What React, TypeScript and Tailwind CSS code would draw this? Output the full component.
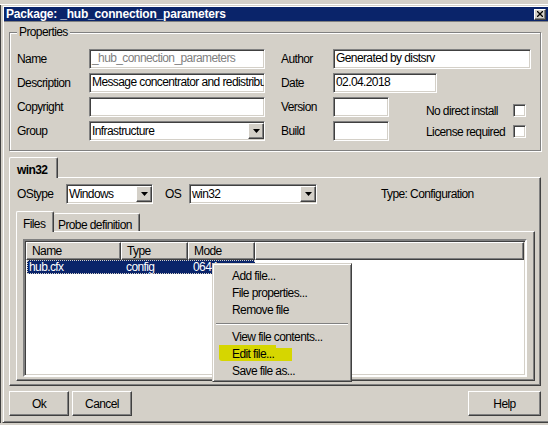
const sunken =
  "border border-t-[#808080] border-l-[#808080] border-b-white border-r-white shadow-[inset_1px_1px_0_#404040,inset_-1px_-1px_0_#d4d0c8]";
const raised =
  "border border-t-white border-l-white border-b-[#404040] border-r-[#404040] shadow-[inset_-1px_-1px_0_#808080]";

function Field({ value = "", w, muted }: { value?: string; w: string; muted?: boolean }) {
  return (
    <div className={`${sunken} ${w} h-[20px] bg-white pl-[2px] leading-[16px] whitespace-nowrap overflow-hidden ${muted ? "text-[#808080]" : ""}`}>
      {value}
    </div>
  );
}

function Arrow() {
  return (
    <div className={`${raised} w-[16px] h-[16px] bg-[#d4d0c8] flex items-center justify-center shrink-0`}>
      <svg width="7" height="4" viewBox="0 0 7 4">
        <path d="M0 0h7L3.5 4z" fill="#000" />
      </svg>
    </div>
  );
}

function Select({ value, w }: { value: string; w: string }) {
  return (
    <div className={`${sunken} ${w} h-[20px] bg-white flex items-center`}>
      <div className="flex-1 pl-[2px] leading-[16px] whitespace-nowrap overflow-hidden">{value}</div>
      <Arrow />
    </div>
  );
}

function Check() {
  return <div className={`${sunken} w-[13px] h-[13px] bg-white`} />;
}

function Row({ label, lw, children }: { label: string; lw: string; children: React.ReactNode }) {
  return (
    <div className="flex items-center h-[20px]">
      <div className={`${lw} shrink-0`}>{label}</div>
      {children}
    </div>
  );
}

function Button({ label, w }: { label: string; w: string }) {
  return (
    <div className={`${raised} ${w} h-[25px] flex items-center justify-center`}>{label}</div>
  );
}

export default function App() {
  return (
    <div className="relative w-[548px] h-[425px] overflow-hidden bg-[#d4d0c8] text-[12px] tracking-[-0.6px] text-black font-['Liberation_Sans',Arial,sans-serif]">
      <div className="h-[5px] border-b border-white" />
      <div className="flex">
        <div className="w-[2px] shrink-0 border-l border-[#404040]" />
        <div className="w-[550px] h-[418px] shrink-0 flex flex-col border border-[#d4d0c8] border-r-[#404040] border-b-[#404040] p-[1px] shadow-[inset_1px_1px_0_#fff,inset_-1px_-1px_0_#808080]">
          {/* title bar */}
          <div className="h-[14px] bg-[#0a246a] flex items-center pl-[2px] pr-[4px]">
            <div className="flex-1 text-white font-bold text-[12px] tracking-[-0.2px] leading-[14px]">
              Package: _hub_connection_parameters
            </div>
            <div className={`${raised} w-[12px] h-[11px] bg-[#d4d0c8] flex items-center justify-center`}>
              <svg width="6" height="6" viewBox="0 0 6 6">
                <path d="M0 0L6 6M6 0L0 6" stroke="#000" strokeWidth="1.3" />
              </svg>
            </div>
          </div>
          <div className="h-[1px] bg-[#808080]" />

          <div className="pl-[5px] flex flex-col">
            {/* Properties group */}
            <div className="relative mt-[10px] w-[532px] h-[119px] border border-[#808080] shadow-[inset_1px_1px_0_#fff,1px_1px_0_#fff] pt-[16px] pl-[7px]">
              <div className="absolute -top-[8px] left-[7px] px-[2px] bg-[#d4d0c8] leading-[14px]">Properties</div>
              <div className="flex">
                <div className="flex flex-col gap-[4px]">
                  <Row label="Name" lw="w-[72px]">
                    <Field value="_hub_connection_parameters" w="w-[176px]" muted />
                  </Row>
                  <Row label="Description" lw="w-[72px]">
                    <Field value="Message concentrator and redistribu" w="w-[176px]" />
                  </Row>
                  <Row label="Copyright" lw="w-[72px]">
                    <Field w="w-[176px]" />
                  </Row>
                  <Row label="Group" lw="w-[72px]">
                    <Select value="Infrastructure" w="w-[176px]" />
                  </Row>
                </div>
                <div className="w-[16px]" />
                <div className="flex flex-col gap-[4px]">
                  <Row label="Author" lw="w-[52px]">
                    <Field value="Generated by distsrv" w="w-[198px]" />
                  </Row>
                  <Row label="Date" lw="w-[52px]">
                    <Field value="02.04.2018" w="w-[104px]" />
                  </Row>
                  <div className="flex">
                    <div className="flex flex-col gap-[4px]">
                      <Row label="Version" lw="w-[52px]">
                        <Field w="w-[56px]" />
                      </Row>
                      <Row label="Build" lw="w-[52px]">
                        <Field w="w-[56px]" />
                      </Row>
                    </div>
                    <div className="ml-[37px] pt-[7px] flex flex-col gap-[8px]">
                      <div className="flex items-center h-[13px]">
                        <div className="w-[87px]">No direct install</div>
                        <Check />
                      </div>
                      <div className="flex items-center h-[13px]">
                        <div className="w-[87px]">License required</div>
                        <Check />
                      </div>
                    </div>
                  </div>
                </div>
              </div>
            </div>

            {/* win32 tab */}
            <div className="mt-[6px] flex">
              <div className="relative z-10 -mb-[1px] w-[49px] h-[21px] bg-[#d4d0c8] border-t border-l border-white border-r border-r-[#404040] rounded-t-[2px] shadow-[inset_-1px_0_0_#808080] font-bold pl-[7px] pt-[3px]">
                win32
              </div>
            </div>
            <div className="w-[532px] h-[209px] border border-t-white border-l-white border-b-[#404040] border-r-[#404040] shadow-[inset_-1px_-1px_0_#808080] pt-[6px] pl-[6px]">
              <div className="flex items-center h-[20px]">
                <div className="w-[50px] pl-[1px]">OStype</div>
                <Select value="Windows" w="w-[87px]" />
                <div className="ml-[12px] w-[24px]">OS</div>
                <Select value="win32" w="w-[128px]" />
                <div className="ml-[64px]">Type: Configuration</div>
              </div>

              {/* inner tabs */}
              <div className="mt-[7px] flex items-end">
                <div className="relative z-10 -mb-[1px] w-[38px] h-[21px] bg-[#d4d0c8] border-t border-l border-white border-r border-r-[#404040] rounded-t-[2px] shadow-[inset_-1px_0_0_#808080] pl-[6px] pt-[3px]">
                  Files
                </div>
                <div className="w-[86px] h-[18px] border-t border-white border-r border-r-[#404040] rounded-t-[2px] shadow-[inset_-1px_0_0_#808080] pl-[4px] pt-[2px]">
                  Probe definition
                </div>
              </div>
              <div className="w-[519px] h-[150px] border border-t-white border-l-white border-b-[#404040] border-r-[#404040] shadow-[inset_-1px_-1px_0_#808080] pt-[7px] pl-[6px]">
                <div className="w-[504px] h-[138px] bg-white border-2 border-t-[#808080] border-l-[#808080] border-b-white border-r-white shadow-[inset_1px_1px_0_#404040,inset_-1px_-1px_0_#d4d0c8] p-[1px] flex flex-col">
                  <div className="flex h-[18px] bg-[#d4d0c8]">
                    <div className={`${raised} w-[95px] pl-[5px] leading-[16px]`}>Name</div>
                    <div className={`${raised} w-[67px] pl-[5px] leading-[16px]`}>Type</div>
                    <div className={`${raised} w-[67px] pl-[5px] leading-[16px]`}>Mode</div>
                    <div className={`${raised} flex-1`} />
                  </div>
                  <div className="flex pl-[1px]">
                    <div className="flex h-[14px] w-[228px] bg-[#0a246a] text-white leading-[14px] outline outline-1 outline-dotted outline-[#d4d0c8] -outline-offset-1">
                      <div className="w-[99px] pl-[2px]">hub.cfx</div>
                      <div className="w-[67px]">config</div>
                      <div>0644</div>
                    </div>
                  </div>
                </div>
              </div>
            </div>

            {/* buttons */}
            <div className="mt-[5px] w-[532px] flex">
              <Button label="Ok" w="w-[60px]" />
              <div className="w-[3px]" />
              <Button label="Cancel" w="w-[60px]" />
              <div className="flex-1" />
              <Button label="Help" w="w-[73px]" />
            </div>
          </div>
        </div>
      </div>

      {/* context menu */}
      <div className="absolute left-[212px] top-[263px] w-[140px] h-[119px] bg-[#d4d0c8] border border-[#d4d0c8] border-r-[#404040] border-b-[#404040] shadow-[inset_1px_1px_0_#fff,inset_-1px_-1px_0_#808080] pt-[4px]">
        <div className="absolute left-[6px] top-[81px] w-[57px] h-[16px] bg-[#d6d600] rounded-bl-[3px]" />
        <div className="absolute left-[62px] top-[84px] w-[17px] h-[13px] bg-[#d6d600]" />
        <div className="relative flex flex-col">
          <div className="h-[17px] pl-[19px] leading-[17px]">Add file...</div>
          <div className="h-[17px] pl-[19px] leading-[17px]">File properties...</div>
          <div className="h-[17px] pl-[19px] leading-[17px]">Remove file</div>
          <div className="h-[10px] flex items-center px-[3px]">
            <div className="w-full h-[2px] border-t border-[#808080] border-b border-b-white" />
          </div>
          <div className="h-[17px] pl-[19px] leading-[17px]">View file contents...</div>
          <div className="h-[17px] pl-[19px] leading-[17px]">Edit file...</div>
          <div className="h-[17px] pl-[19px] leading-[17px]">Save file as...</div>
        </div>
      </div>
    </div>
  );
}
